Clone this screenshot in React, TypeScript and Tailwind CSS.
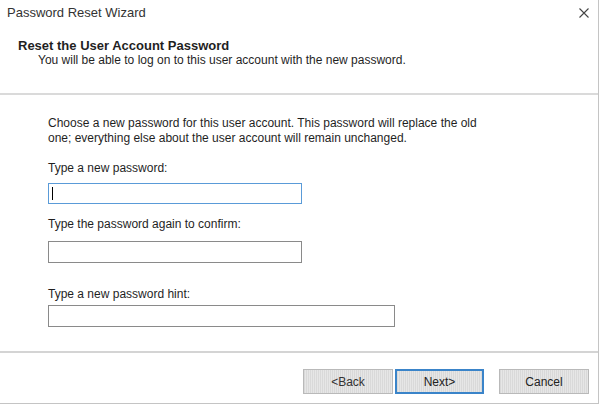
const btnBg =
  "bg-[repeating-linear-gradient(90deg,#d9d9d9_0px,#d9d9d9_1px,#e6e6e6_1px,#e6e6e6_2px)]";

export default function App() {
  return (
    <div
      className="flex h-[406px] w-[600px] flex-col bg-white text-[#1f1f1f]"
      style={{ fontFamily: '"Liberation Sans", Arial, sans-serif' }}
    >
      <div className="flex h-[404px] w-[599px] flex-col border-r border-b border-[#c4c4c4]">
        {/* title bar */}
        <div className="flex h-[26px] items-center justify-between pl-[7px] pr-[9px]">
          <span className="text-[13px] text-[#333]">Password Reset Wizard</span>
          <svg viewBox="0 0 10 10" className="h-[10px] w-[10px]" fill="none" stroke="#444" strokeWidth="1.1">
            <path d="M0.5 0.5l9 9M9.5 0.5l-9 9" />
          </svg>
        </div>

        {/* header */}
        <div className="h-[69px] border-b-2 border-[#dadada] pl-[18px] pt-[12px]">
          <p className="text-[13px] font-bold leading-[15px]">Reset the User Account Password</p>
          <p className="pl-[20px] text-[12px] leading-[15px]">
            You will be able to log on to this user account with the new password.
          </p>
        </div>

        {/* body */}
        <div className="flex-1 pl-[48px] pt-[21px] text-[12px]">
          <p className="w-[452px] leading-[15px]">
            Choose a new password for this user account. This password will replace the old one; everything else about
            the user account will remain unchanged.
          </p>
          <p className="mt-[15px] leading-[15px]">Type a new password:</p>
          <div className="mt-[7px] flex h-[21px] w-[254px] items-center border border-[#5a9bd8] pl-[3px]">
            <span className="h-[13px] w-[1px] bg-black" />
          </div>
          <p className="mt-[13px] leading-[15px]">Type the password again to confirm:</p>
          <div className="mt-[9px] h-[22px] w-[254px] border border-[#8a8a8a]" />
          <p className="mt-[24px] leading-[15px]">Type a new password hint:</p>
          <div className="mt-[3px] h-[22px] w-[347px] border border-[#8a8a8a]" />
        </div>

        {/* footer */}
        <div className="flex h-[52px] items-start justify-end gap-[2px] border-t-2 border-[#d4d4d4] pr-[9px] pt-[16px] text-[12px]">
          <button className={`h-[25px] w-[90px] border border-[#b9b9b9] ${btnBg} text-[#333]`}>&lt;Back</button>
          <button className={`h-[25px] w-[89px] border-2 border-[#3a84c9] ${btnBg} text-[#222]`}>Next&gt;</button>
          <button className={`ml-[13px] h-[25px] w-[90px] border border-[#b9b9b9] ${btnBg} text-[#222]`}>
            Cancel
          </button>
        </div>
      </div>
    </div>
  );
}
